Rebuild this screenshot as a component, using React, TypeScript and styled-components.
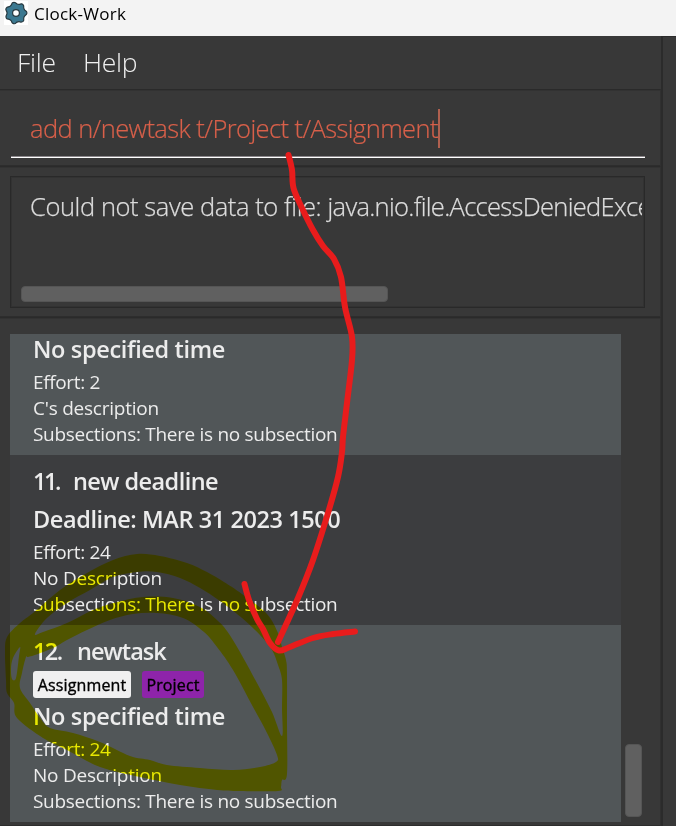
import React from 'react';
import styled, { createGlobalStyle, css } from 'styled-components';

const GlobalStyle = createGlobalStyle`
  *, *::before, *::after { box-sizing: border-box; }
  body {
    margin: 0;
    overflow: hidden;
    background: #383838;
    font-family: 'Open Sans', 'Noto Sans', sans-serif;
  }
`;

const Window = styled.div`
  position: relative;
  width: 676px;
  height: 826px;
  display: flex;
  flex-direction: column;
  overflow: hidden;
  background: #383838;
`;

const TitleBar = styled.header`
  flex: none;
  height: 36px;
  display: flex;
  align-items: flex-start;
  background: #f3f3f3;
  color: #000;
`;

const AppIcon = styled.svg`
  flex: none;
  width: 24px;
  height: 24px;
  margin: 1px 0 0 4px;
  background: #fff;
`;

const Title = styled.span`
  margin-left: 6px;
  font-size: 17px;
  line-height: 28px;
  letter-spacing: 0.25px;
`;

const Content = styled.div`
  flex: 1;
  min-height: 0;
  display: flex;
`;

const LeftColumn = styled.main`
  flex: none;
  width: 663px;
  display: flex;
  flex-direction: column;
  border-right: 2px solid #2b2b2b;
`;

const SideColumn = styled.aside`
  flex: 1;
  border-top: 1px solid #2b2b2b;
`;

const MenuBar = styled.nav`
  flex: none;
  height: 53px;
  display: flex;
  gap: 28px;
  padding-left: 17px;
`;

const MenuItem = styled.span<{ $width: number }>`
  width: ${(p) => p.$width}px;
  font-size: 26.5px;
  font-weight: 300;
  line-height: 52px;
  letter-spacing: -0.3px;
  color: #efefef;
  white-space: nowrap;
`;

const Pane = styled.section<{ $height?: number }>`
  ${(p) => (p.$height ? css`flex: none; height: ${p.$height}px;` : css`flex: 1;`)}
  min-height: 0;
  border-top: 1px solid #2a2a2a;
  border-right: 1px solid #303030;
  box-shadow: inset 0 1px #323232, inset 0 -1px #2d2d2d;
`;

const CommandField = styled.div`
  height: 68px;
  display: flex;
  align-items: center;
  margin: 0 15px 0 11px;
  padding-left: 19px;
  padding-top: 9px;
  border-bottom: 1px solid #fff;
  box-shadow: inset 0 -1px #8b878b;
`;

const CommandText = styled.span`
  font-size: 25.5px;
  font-weight: 300;
  line-height: 38px;
  letter-spacing: -0.59px;
  white-space: nowrap;
  color: #d9604a;
  -webkit-text-stroke: 0.2px #d9604a;
`;

const Caret = styled.span`
  width: 2px;
  height: 39px;
  background: #b0604f;
`;

const ResultBox = styled.div`
  width: 635px;
  height: 132px;
  display: flex;
  flex-direction: column;
  justify-content: space-between;
  margin: 9px 0 0 10px;
  padding: 10px 2px 5px 10px;
  border: 1px solid #292929;
  box-shadow: inset 0 0 0 1px #323232;
`;

const ResultText = styled.div`
  overflow: hidden;
  padding-left: 9px;
  font-size: 25.5px;
  font-weight: 300;
  line-height: 38px;
  letter-spacing: -0.42px;
  white-space: nowrap;
  color: #dcdcdc;
  -webkit-text-stroke: 0.25px #dcdcdc;
`;

const ExceptionName = styled.span`
  letter-spacing: -0.69px;
`;

const Thumb = styled.div<{ $w: number; $h: number }>`
  flex: none;
  width: ${(p) => p.$w}px;
  height: ${(p) => p.$h}px;
  border: 1px solid #555;
  border-radius: 4px;
  background: #606060;
`;

const ListPane = styled(Pane)`
  display: flex;
  align-items: flex-end;
  gap: 4px;
  padding: 16px 0 9px 10px;
`;

const TaskList = styled.div`
  align-self: stretch;
  width: 611px;
  display: flex;
  flex-direction: column;
`;

const TaskCard = styled.article<{ $height: number; $alt?: boolean }>`
  flex: none;
  height: ${(p) => p.$height}px;
  display: flex;
  flex-direction: column;
  justify-content: flex-end;
  padding: 0 0 8px 23px;
  background: ${(p) => (p.$alt ? '#3c3d3f' : '#515658')};
  color: #ececec;
`;

const Heading = styled.div<{ $height: number; $spacing: number }>`
  height: ${(p) => p.$height}px;
  font-size: 23.5px;
  font-weight: 600;
  line-height: 30px;
  letter-spacing: ${(p) => p.$spacing}px;
  white-space: nowrap;
  display: flex;
`;

const TaskNumber = styled.span<{ $width: number; $spacing: number }>`
  width: ${(p) => p.$width}px;
  letter-spacing: ${(p) => p.$spacing}px;
`;

const Detail = styled.div<{ $spacing?: number }>`
  font-size: 19px;
  line-height: 26px;
  letter-spacing: ${(p) => p.$spacing ?? -0.23}px;
  white-space: nowrap;
`;

const Tags = styled.div`
  height: 33px;
  display: flex;
  gap: 11px;
  padding-top: 3px;
`;

const Tag = styled.span<{ $color: string; $width: number }>`
  width: ${(p) => p.$width}px;
  height: 27px;
  border-radius: 3px;
  background: ${(p) => p.$color};
  color: #000;
  font-size: 16px;
  line-height: 28px;
  letter-spacing: 0.15px;
  text-align: center;
  -webkit-text-stroke: 0.35px #000;
`;

const Overlay = styled.svg`
  position: absolute;
  inset: 0;
  width: 676px;
  height: 826px;
  pointer-events: none;
`;

const Highlight = styled(Overlay)`
  mix-blend-mode: multiply;
`;

type Point = [number, number];

/** Smooth curve through the points, open or closed. */
function curve(points: Point[], closed = false): string {
  const n = points.length;
  const at = (i: number): Point =>
    closed ? points[(i + n) % n] : points[Math.max(0, Math.min(n - 1, i))];
  let d = `M${points[0][0]} ${points[0][1]}`;
  for (let i = 0; i < (closed ? n : n - 1); i++) {
    const [a, b, c, e] = [at(i - 1), at(i), at(i + 1), at(i + 2)];
    d += `C${b[0] + (c[0] - a[0]) / 6} ${b[1] + (c[1] - a[1]) / 6} ${c[0] - (e[0] - b[0]) / 6} ${
      c[1] - (e[1] - b[1]) / 6
    } ${c[0]} ${c[1]}`;
  }
  return closed ? d + 'Z' : d;
}

const ring: Point[] = [
  [7, 637], [20, 623], [33, 613], [60, 590], [87, 573], [113, 560], [137, 554], [160, 556],
  [187, 563], [207, 572], [224, 582], [242, 594], [267, 614], [278, 633], [282, 647], [286, 660],
  [287, 673], [287, 720], [287, 774], [282, 780], [281, 787], [278, 791], [240, 791], [217, 790],
  [180, 785], [140, 777], [100, 767], [67, 750], [43, 738], [17, 718], [14, 703], [7, 693],
  [6, 680], [5, 653],
];
const upperGap: Point[] = [
  [35, 634], [47, 618], [67, 603], [90, 590], [113, 577], [137, 572], [157, 572], [180, 578],
  [200, 588], [220, 601], [242, 618], [260, 635], [272, 650], [278, 665], [282, 680], [282, 708],
  [282, 736], [272, 712], [257, 683], [240, 652], [227, 631], [217, 620], [200, 607], [173, 598],
  [143, 597], [117, 602], [93, 610], [67, 623], [43, 632],
];
const innerGap: Point[] = [
  [28, 657], [38, 654], [55, 647], [67, 640], [87, 630], [110, 620], [133, 614], [157, 613],
  [183, 618], [204, 632], [217, 647], [233, 670], [253, 707], [267, 733], [277, 755], [276, 762],
  [260, 767], [233, 770], [200, 768], [167, 765], [150, 760], [130, 756], [100, 742], [73, 733],
  [50, 728], [40, 718], [30, 703], [20, 688], [22, 673], [26, 657],
];
const sliver: Point[] = [[20, 647], [19, 656], [16, 678], [12, 679], [11, 669], [13, 658]];

const shaft: Point[] = [
  [288.5, 155], [292, 170], [293.5, 188], [302, 208], [313, 230], [323, 246], [334, 259],
  [341, 277], [345, 307], [352, 337], [352, 360], [347, 403], [343, 437], [342, 452], [338, 477],
  [328, 513], [313, 560], [298, 598], [278, 642],
];
const head: Point[] = [
  [244.5, 584], [249, 600], [257, 619], [263, 629], [270, 643], [279, 650.5], [290, 647],
  [313, 638], [333, 634], [355, 631.5],
];

const gear: Point[] = Array.from({ length: 28 }, (_, i): Point => {
  const angle = (i / 28) * Math.PI * 2 - 1.9;
  const radius = [10.8, 10.6, 9.1, 9.2][i % 4];
  return [12 + Math.cos(angle) * radius, 12 + Math.sin(angle) * radius];
});

export default function App() {
  return (
    <>
      <GlobalStyle />
      <Window>
        <TitleBar>
          <AppIcon viewBox="0 0 24 24">
            <path d={curve(gear, true)} fill="#3b7890" stroke="#26383f" strokeWidth="1.2" />
            <circle cx="12" cy="12" r="3.4" fill="#fff" stroke="#26383f" strokeWidth="1.2" />
          </AppIcon>
          <Title>Clock-Work</Title>
        </TitleBar>
        <Content>
          <LeftColumn>
            <MenuBar>
              <MenuItem $width={38}>File</MenuItem>
              <MenuItem $width={54}>Help</MenuItem>
            </MenuBar>
            <Pane $height={77}>
              <CommandField>
                <CommandText>add n/newtask t/Project t/Assignment</CommandText>
                <Caret />
              </CommandField>
            </Pane>
            <Pane $height={151}>
              <ResultBox>
                <ResultText>
                  Could not save data to file:{' '}
                  <ExceptionName>java.nio.file.AccessDeniedException</ExceptionName>
                </ResultText>
                <Thumb $w={367} $h={16} />
              </ResultBox>
            </Pane>
            <ListPane>
              <TaskList>
                <TaskCard $height={121}>
                  <Heading $height={35} $spacing={-0.34}>No specified time</Heading>
                  <Detail $spacing={-0.35}>Effort: 2</Detail>
                  <Detail>C's description</Detail>
                  <Detail $spacing={-0.3}>Subsections: There is no subsection</Detail>
                </TaskCard>
                <TaskCard $height={170} $alt>
                  <Heading $height={38} $spacing={-0.56}>
                    <TaskNumber $width={40} $spacing={-2.4}>11.</TaskNumber>
                    new deadline
                  </Heading>
                  <Heading $height={35} $spacing={-0.41}>Deadline: MAR 31 2023 1500</Heading>
                  <Detail $spacing={-0.35}>Effort: 24</Detail>
                  <Detail>No Description</Detail>
                  <Detail $spacing={-0.3}>Subsections: There is no subsection</Detail>
                </TaskCard>
                <TaskCard $height={197}>
                  <Heading $height={32} $spacing={-0.95}>
                    <TaskNumber $width={44} $spacing={-1.6}>12.</TaskNumber>
                    newtask
                  </Heading>
                  <Tags>
                    <Tag $color="#f0f0f0" $width={98}>Assignment</Tag>
                    <Tag $color="#8e24aa" $width={62}>Project</Tag>
                  </Tags>
                  <Heading $height={35} $spacing={-0.34}>No specified time</Heading>
                  <Detail $spacing={-0.35}>Effort: 24</Detail>
                  <Detail>No Description</Detail>
                  <Detail $spacing={-0.3}>Subsections: There is no subsection</Detail>
                </TaskCard>
              </TaskList>
              <Thumb $w={17} $h={73} />
            </ListPane>
          </LeftColumn>
          <SideColumn />
        </Content>
        <Highlight viewBox="0 0 676 826">
          <path
            d={[ring, upperGap, innerGap, sliver].map((p) => curve(p, true)).join('')}
            fill="#fbfb00"
            fillRule="evenodd"
          />
        </Highlight>
        <Overlay viewBox="0 0 676 826">
          <g fill="none" stroke="#e81c1c" strokeWidth="6" strokeLinecap="round" strokeLinejoin="round">
            <path d={curve(shaft)} />
            <path d={curve(head)} />
          </g>
        </Overlay>
      </Window>
    </>
  );
}
